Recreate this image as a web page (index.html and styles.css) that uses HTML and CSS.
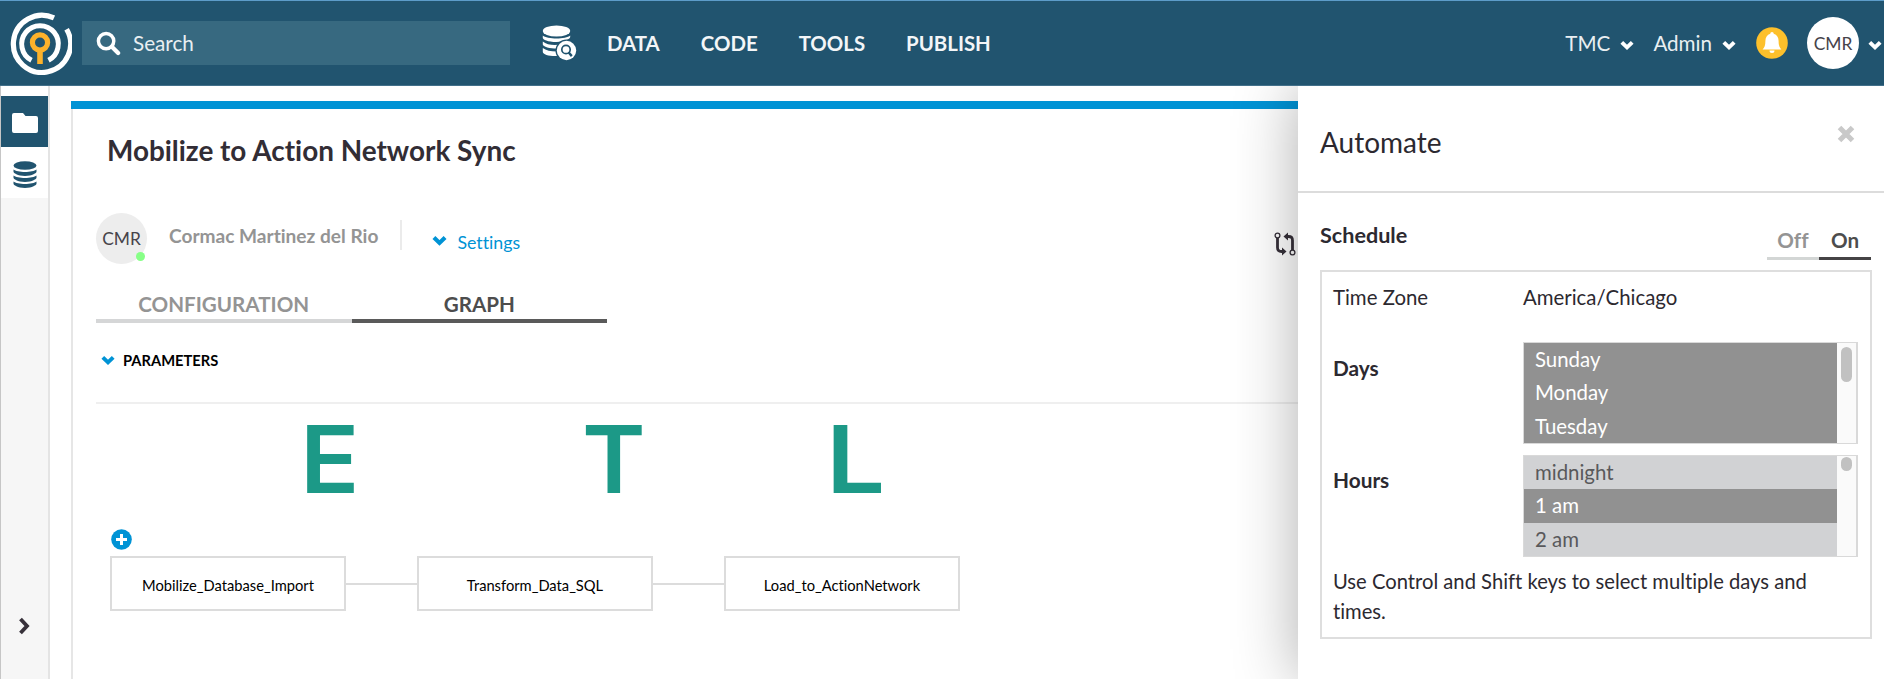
FILE: index.html
```html
<!DOCTYPE html>
<html lang="en">
<head>
<meta charset="utf-8">
<title>Mobilize to Action Network Sync</title>
<link rel="stylesheet" href="styles.css">
</head>
<body>
<svg class="defs" width="0" height="0">
  <symbol id="chev" viewBox="0 0 14 10"><path d="M1.800 2.300 7 7.300 12.200 2.300" fill="none" stroke="currentColor" stroke-width="3.900"/></symbol>
</svg>
<header class="topbar">
  <svg class="logo" viewBox="0 0 64 64">
    <g fill="none" stroke="#fff">
      <path d="M46 6.900A28.600 28.600 0 1 0 58.600 18.300" stroke-width="5.200"/>
      <path d="M23.500 49.200A18.300 18.300 0 1 1 40.500 49.200" stroke-width="5"/>
    </g>
    <circle cx="32" cy="31.500" r="7.600" fill="none" stroke="#fdb22b" stroke-width="5.200"/>
    <path d="M29.200 38h5.600v15h-5.600z" fill="#fdb22b"/>
  </svg>
  <div class="search">
    <svg class="search-icon" viewBox="0 0 26 26"><circle cx="10.500" cy="10.500" r="8" fill="none" stroke="#fff" stroke-width="3.600"/><path d="M16.500 16.500l6.500 6.500" stroke="#fff" stroke-width="4.400" stroke-linecap="round"/></svg>
    <span class="search-label">Search</span>
  </div>
  <svg class="db-search" viewBox="0 0 36 36">
    <g fill="#fff">
      <ellipse cx="14.500" cy="6" rx="13.700" ry="5.600"/>
      <path d="M.8 10.500C5 14.500 24 14.500 28.200 10.500V12c0 1.500-5 5-13.700 5S.8 14.500.8 13z"/>
      <path d="M.8 16.500C5 20.300 14 20.800 20 19l-3 4.500C10 24 .8 22 .8 19.500z"/>
      <path d="M.8 23c3 2.500 8 3.500 13.700 3.500l.8 4.500C8 31.500.8 29.500.8 27z"/>
    </g>
    <circle cx="24.500" cy="25.500" r="11" fill="#21546f"/>
    <circle cx="24.500" cy="25.500" r="9.700" fill="#fff"/>
    <circle cx="24" cy="24.500" r="4.200" fill="none" stroke="#21546f" stroke-width="1.700"/>
    <path d="M26.500 27.300l3.300 3.800" stroke="#21546f" stroke-width="2.400"/>
  </svg>
  <nav class="nav">
    <span>DATA</span><span>CODE</span><span>TOOLS</span><span>PUBLISH</span>
  </nav>
  <div class="account">
    <span>TMC</span><svg class="chev"><use href="#chev"/></svg>
    <span class="admin">Admin</span><svg class="chev"><use href="#chev"/></svg>
    <svg class="bell" viewBox="0 0 32 32"><circle cx="16" cy="16" r="15.800" fill="#fdc02b"/><path d="M16 5c1 0 1.700.7 1.700 1.800 3.300.9 4.900 3.700 4.900 7.200 0 4.500 1 6.500 2.800 8.500H6.600C8.400 20.500 9.400 18.500 9.400 14c0-3.500 1.600-6.300 4.900-7.200C14.300 5.700 15 5 16 5zM13.500 23.500h5a2.500 2.500 0 0 1-5 0z" fill="#fff"/></svg>
    <span class="avatar avatar-top">CMR</span>
    <svg class="chev chev-last"><use href="#chev"/></svg>
  </div>
</header>
<div class="body">
  <aside class="rail">
    <div class="rail-item active"><svg class="folder" viewBox="0 0 26 20"><path d="M2 0h9l2.500 3H24a2 2 0 0 1 2 2v13a2 2 0 0 1-2 2H2a2 2 0 0 1-2-2V2a2 2 0 0 1 2-2z" fill="#fff"/></svg></div>
    <div class="rail-item"><svg class="db" viewBox="0 0 24 27"><g fill="#21546f"><ellipse cx="12" cy="4.500" rx="11.500" ry="4.300"/><path d="M.5 8.500C4 11.800 20 11.800 23.500 8.500v2.300c0 1.200-4 4.200-11.500 4.200S.5 12 .5 10.800zM.5 14.500c3.500 3.300 19.500 3.300 23 0v2.300c0 1.200-4 4.200-11.500 4.200S.5 18 .5 16.800zM.5 20.500c3.500 3.300 19.500 3.300 23 0v2.300c0 1.200-4 4.200-11.500 4.200S.5 24 .5 22.800z"/></g></svg></div>
    <div class="rail-rest"><svg class="expand" viewBox="0 0 12 18"><path d="M2.500 2 9 9l-6.500 7" fill="none" stroke="#37313a" stroke-width="3.800"/></svg></div>
  </aside>
  <main class="sheet">
    <h1 class="title">Mobilize to Action Network Sync</h1>
    <div class="meta">
      <span class="avatar avatar-owner">CMR<i class="status"></i></span>
      <span class="owner">Cormac Martinez del Rio</span>
      <i class="sep"></i>
      <svg class="chev chev-set"><use href="#chev"/></svg>
      <span class="settings">Settings</span>
      <svg class="branch" viewBox="0 0 22 24" fill="none" stroke="#37313a"><circle cx="3.500" cy="3.500" r="2.400" stroke-width="1.300"/><circle cx="18.500" cy="20.500" r="2.400" stroke-width="1.300"/><path d="M3.500 6v9.500q0 4 4 4h1M18.500 18V8.500q0-4-4-4h-1" stroke-width="2.800"/><path d="M8 15.500v8l4.500-4zM14 .5v8l-4.500-4z" fill="#37313a" stroke="none"/></svg>
    </div>
    <div class="tabs"><div class="tab">CONFIGURATION</div><div class="tab on">GRAPH</div></div>
    <div class="params"><svg class="chev chev-par"><use href="#chev"/></svg><span class="params-label">PARAMETERS</span></div>
    <section class="canvas">
      <span class="stage stage-e">E</span><span class="stage stage-t">T</span><span class="stage stage-l">L</span>
      <svg class="add" viewBox="0 0 21 21"><circle cx="10.500" cy="10.500" r="10.300" fill="#0093d5"/><path d="M10.500 5v11M5 10.500h11" stroke="#fff" stroke-width="3"/></svg>
      <i class="wire wire-1"></i><i class="wire wire-2"></i>
      <div class="node node-1">Mobilize_Database_Import</div>
      <div class="node node-2">Transform_Data_SQL</div>
      <div class="node node-3">Load_to_ActionNetwork</div>
    </section>
  </main>
</div>
<aside class="drawer">
  <div class="drawer-head"><span>Automate</span><svg class="close" viewBox="0 0 18 18"><path d="M2.500 2.500l13 13M15.500 2.500l-13 13" stroke="#c9c9c9" stroke-width="5"/></svg></div>
  <div class="sched-head"><span>Schedule</span><div class="toggle"><span class="opt">Off</span><span class="opt on">On</span></div></div>
  <div class="sched-box">
    <div class="row row-tz"><span class="label">Time Zone</span><span>America/Chicago</span></div>
    <div class="row row-days"><span class="label strong">Days</span>
      <div class="list"><div class="items"><div class="item sel">Sunday</div><div class="item sel">Monday</div><div class="item sel">Tuesday</div></div><div class="track"><i class="thumb thumb-days"></i></div></div></div>
    <div class="row row-hours"><span class="label strong">Hours</span>
      <div class="list"><div class="items"><div class="item">midnight</div><div class="item sel">1 am</div><div class="item">2 am</div></div><div class="track"><i class="thumb thumb-hours"></i></div></div></div>
    <p class="hint">Use Control and Shift keys to select multiple days and times.</p>
  </div>
</aside>
</body>
</html>
```
FILE: styles.css
```css
* { box-sizing: border-box; }
body { margin: 0; width: 1884px; height: 679px; overflow: hidden; position: relative; background: #fff; color: #2c2930; font-family: Lato, "Liberation Sans", sans-serif; font-variant-ligatures: none; }
svg { display: block; flex: none; }
.defs { position: absolute; }
.topbar { height: 86px; background: #21546f; border-top: 1px solid #5d9cc9; border-bottom: 1px solid #42708a; display: flex; align-items: center; color: #fff; position: relative; z-index: 3; }
.logo { width: 64px; height: 64px; margin: 0 0 0 8px; }
.search { margin-left: 10px; width: 428px; height: 44px; background: #376980; display: flex; align-items: center; color: #e9eff2; font-size: 20.700px; }
.search-icon { width: 25px; height: 25px; margin-left: 14px; }
.search-label { margin-left: 12px; }
.db-search { width: 36px; height: 36px; margin-left: 32px; }
.nav { display: flex; margin-left: 29px; gap: 41px; font-size: 20.400px; font-weight: 700; color: #f3f6f8; }
.account { margin-left: auto; display: flex; align-items: center; font-size: 20.600px; color: #e9eff2; }
.chev { width: 14px; height: 10px; color: #fff; }
.account .chev { margin: 4px 0 0 10px; }
.admin { margin-left: 19px; }
.bell { width: 32px; height: 32px; margin-left: 20px; }
.avatar { width: 52px; height: 52px; border-radius: 50%; display: flex; align-items: center; justify-content: center; font-size: 17.400px; color: #46434a; position: relative; flex: none; }
.avatar-top { background: #fff; margin-left: 19px; }
.account .chev-last { margin-left: 9px; margin-right: 2px; }
.body { display: flex; height: 593px; }
.rail { width: 50px; border-left: 1px solid #c6c6c6; border-right: 2px solid #e4e4e4; padding-top: 10px; display: flex; flex-direction: column; }
.rail-item { height: 51px; display: flex; align-items: center; justify-content: center; }
.rail-item.active { background: #21546f; }
.folder { width: 26px; height: 20px; margin-top: 3px; }
.db { width: 24px; height: 27px; margin-top: 3px; }
.rail-rest { flex: 1; background: #f6f6f6; padding: 419px 0 0 17px; }
.expand { width: 12px; height: 18px; }
.sheet { margin: 15px 0 0 21px; flex: 1; border-top: 8px solid #0093d5; box-shadow: inset 2px 0 #e6e6e6; padding-left: 25px; }
.title { margin: 24px 0 0 11px; font-size: 27.900px; line-height: 35px; height: 34px; font-weight: 700; color: #322d35; }
.meta { margin-top: 46px; height: 52px; display: flex; align-items: flex-start; }
.avatar-owner { background: #ededed; width: 51px; height: 51px; padding-bottom: 1px; }
.status { position: absolute; right: 2px; bottom: 3px; width: 9px; height: 9px; border-radius: 50%; background: #87ff87; }
.owner { margin: 11px 0 0 22px; font-size: 19.100px; font-weight: 700; color: #949494; line-height: 23px; }
.sep { width: 2px; height: 30px; background: #ebebeb; margin: 7px 0 0 22px; }
.chev-set { color: #0093d5; width: 15px; height: 11px; margin: 22px 0 0 30px; }
.settings { margin: 17px 0 0 10px; font-size: 17.800px; line-height: 24px; color: #0093d5; }
.branch { width: 22px; height: 24px; margin: 19px 588px 0 auto; }
.tabs { display: flex; margin-top: 24px; width: 511px; }
.tab { flex: 1; height: 34px; border-bottom: 4px solid #d5d6d7; text-align: center; font-size: 20.600px; font-weight: 700; line-height: 30px; color: #949494; }
.tab.on { border-color: #5a5a5a; color: #4d4d4d; }
.params { margin-top: 28px; height: 53px; border-bottom: 2px solid #efefef; display: flex; font-size: 14.700px; line-height: 19px; font-weight: 700; color: #000; }
.chev-par { width: 14px; height: 10px; color: #0093d5; margin: 4px 0 0 5px; }
.params-label { margin-left: 8px; }
.canvas { position: relative; height: 270px; }
.stage { position: absolute; top: 0; font: 600 93.500px/110px Inter, sans-serif; color: #1c9987; transform-origin: left center; }
.stage-e { left: 204px; transform: scaleX(1.05); } .stage-t { left: 486px; transform: scaleX(1.03); } .stage-l { left: 730px; transform: scaleX(1.12); }
.add { position: absolute; left: 15px; top: 125px; width: 21px; height: 21px; }
.node { position: absolute; top: 152px; width: 236px; height: 55px; border: 2px solid #dcdcdc; text-align: center; font-size: 14.700px; line-height: 55px; color: #000; }
.node-1 { left: 14px; } .node-2 { left: 321px; } .node-3 { left: 628px; }
.wire { position: absolute; top: 179px; height: 2px; width: 71px; background: #dcdcdc; }
.wire-1 { left: 250px; } .wire-2 { left: 557px; }
.drawer { position: absolute; left: 1298px; top: 86px; width: 586px; height: 593px; background: #fff; box-shadow: 0 0 60px rgba(0,0,0,.32); z-index: 2; }
.drawer-head { height: 107px; border-bottom: 2px solid #dcdcdc; display: flex; justify-content: space-between; padding: 39px 29px 0 22px; font-size: 28px; line-height: 34px; }
.close { width: 18px; height: 18px; }
.sched-head { display: flex; justify-content: space-between; padding: 30px 13px 0 22px; height: 77px; font-size: 21.600px; font-weight: 700; line-height: 24px; }
.toggle { display: flex; padding-top: 3px; }
.opt { width: 52px; height: 34px; border-bottom: 3px solid #d3d6d5; text-align: center; line-height: 28px; color: #949494; font-size: 20.600px; }
.opt.on { border-color: #454345; color: #4d4d4d; }
.sched-box { margin: 0 12px 0 22px; height: 369px; border: 2px solid #dedede; padding: 0 11px; font-size: 20.400px; }
.row { display: flex; }
.label { width: 190px; } .strong { font-weight: 700; font-size: 20.800px; }
.row-tz { height: 70px; padding-top: 13px; line-height: 25px; }
.row-days { height: 113px; } .row-hours { height: 102px; }
.row-days .label { padding-top: 13px; line-height: 26px; }
.row-hours .label { padding-top: 12px; line-height: 26px; }
.list { width: 335px; height: 102px; border: 2px solid #d9d9d9; border-width: 1px 2px 1px 1px; display: flex; }
.items { flex: 1; }
.item { height: 33.300px; padding-left: 11px; line-height: 33.300px; background: #d1d2d4; color: #59595b; }
.item.sel { background: #919191; color: #fff; }
.track { width: 19px; background: #fafafa; padding: 4px 0 0 4px; }
.thumb { display: block; width: 11px; border-radius: 6px; background: #c1c1c1; }
.thumb-days { height: 35px; }
.thumb-hours { height: 14px; margin-top: -3px; }
.hint { margin: 10px 0 0; line-height: 29.500px; font-size: 20.200px; }
```
